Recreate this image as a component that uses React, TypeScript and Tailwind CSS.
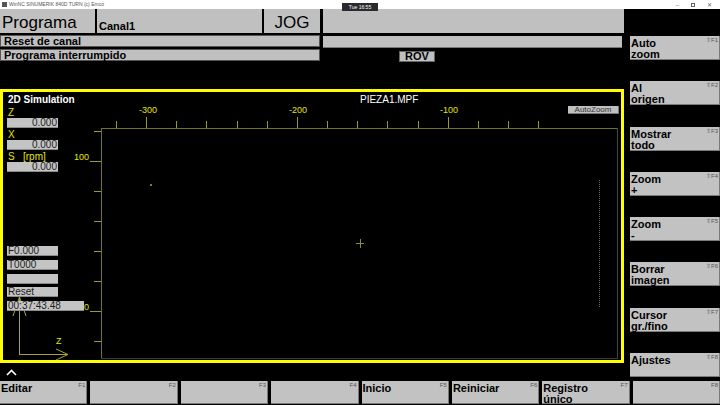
import React from 'react';

const FONT = { fontFamily: '"Liberation Sans", Arial, sans-serif' };

const SIDE_KEYS: [string, string, string][] = [
  ['Auto', 'zoom', '⇧F1'],
  ['Al', 'origen', '⇧F2'],
  ['Mostrar', 'todo', '⇧F3'],
  ['Zoom', '+', '⇧F4'],
  ['Zoom', '-', '⇧F5'],
  ['Borrar', 'imagen', '⇧F6'],
  ['Cursor', 'gr./fino', '⇧F7'],
  ['Ajustes', '', '⇧F8'],
];

const BOTTOM_KEYS: [string, string, string][] = [
  ['Editar', '', 'F1'],
  ['', '', 'F2'],
  ['', '', 'F3'],
  ['', '', 'F4'],
  ['Inicio', '', 'F5'],
  ['Reiniciar', '', 'F6'],
  ['Registro', 'único', 'F7'],
  ['', '', 'F8'],
];

// ticks del eje superior (coordenadas de pantalla)
const TOP_TICKS = Array.from({ length: 15 }, (_, i) => 116 + i * 30.15);
const LEFT_TICKS = Array.from({ length: 8 }, (_, i) => 131 + i * 30);

const SoftKey: React.FC<{ l1: string; l2: string; fk: string; className?: string }> = ({ l1, l2, fk, className = '' }) => (
  <div className={`relative bg-[#c2c2c2] border-b border-r border-[#7a7a7a] px-[1px] pt-[2px] text-[11px] leading-[10px] font-bold text-black ${className}`}>
    <div>{l1}</div>
    {l2 && <div className="pt-[1px]">{l2}</div>}
    <span className="absolute top-[1px] right-[1px] text-[6px] leading-[6px] font-normal text-[#555]">{fk}</span>
  </div>
);

const Field: React.FC<{ value?: string; right?: boolean; wide?: boolean }> = ({ value = '', right = false, wide = false }) => (
  <div
    className={`ml-[4px] h-[10px] bg-[#c4c4c4] border-b border-[#8a8a8a] text-[10px] leading-[10px] text-[#1c1c1c] px-[1px] overflow-hidden whitespace-nowrap ${wide ? 'w-[77px]' : 'w-[51px]'} ${right ? 'text-right' : ''}`}
  >
    {value}
  </div>
);

const Label: React.FC<{ children: React.ReactNode }> = ({ children }) => (
  <div className="h-[12px] flex items-end pl-[5px] text-[10px] leading-[10px] text-[#e4e400] whitespace-pre">{children}</div>
);

const Chart: React.FC = () => (
  <svg width={618} height={255} viewBox="3 105 618 255" className="[grid-area:1/1] block" style={FONT}>
    {/* marco del área de dibujo */}
    <line x1={101} y1={128.5} x2={618} y2={128.5} stroke="#74741f" />
    <line x1={101.5} y1={128} x2={101.5} y2={359} stroke="#74741f" />
    <line x1={617.5} y1={128} x2={617.5} y2={359} stroke="#4a4a18" />
    <line x1={101} y1={358.5} x2={618} y2={358.5} stroke="#3c3c20" />
    {TOP_TICKS.map((x, i) => {
      const major = i === 1 || i === 6 || i === 11;
      return <line key={i} x1={Math.round(x) + 0.5} y1={major ? 117 : 121} x2={Math.round(x) + 0.5} y2={128} stroke="#9a9a30" />;
    })}
    {LEFT_TICKS.map((y, i) => {
      const major = i === 1 || i === 6;
      return <line key={i} x1={major ? 90 : 94} y1={y + 0.5} x2={101} y2={y + 0.5} stroke="#9a9a30" />;
    })}
    <g fill="#e4e400" fontSize={9}>
      <text x={148} y={113} textAnchor="middle">-300</text>
      <text x={298} y={113} textAnchor="middle">-200</text>
      <text x={449} y={113} textAnchor="middle">-100</text>
      <text x={89} y={160} textAnchor="end">100</text>
      <text x={89} y={310} textAnchor="end">0</text>
    </g>
    {/* punto y cursor */}
    <rect x={150} y={184} width={2} height={2} fill="#7a7a30" />
    <line x1={356} y1={243.5} x2={364} y2={243.5} stroke="#8a8a40" />
    <line x1={360.5} y1={239} x2={360.5} y2={248} stroke="#8a8a40" />
    <line x1={599.5} y1={180} x2={599.5} y2={307} stroke="#6a6a6a" strokeDasharray="1 1" />
    {/* indicador de ejes */}
    <g stroke="#a4a434" fill="none">
      <line x1={19.5} y1={297} x2={19.5} y2={354.5} />
      <line x1={19} y1={354.5} x2={68} y2={354.5} />
      <polyline points="13,316 19.5,297 26,316" />
      <polyline points="56,349 68,354.5 56,360" />
    </g>
    <text x={56} y={344} fill="#e4e400" fontSize={9}>Z</text>
  </svg>
);

export default function App() {
  return (
    <div className="relative w-[720px] h-[405px] bg-black overflow-hidden select-none" style={FONT}>
      {/* barra de título de Windows */}
      <div className="h-[9px] bg-white flex items-center pl-[2px] gap-[2px]">
        <div className="w-[5px] h-[5px] bg-[#555]" />
        <span className="text-[5px] leading-[5px] text-[#555]">WinNC SINUMERIK 840D TURN (c) Emco</span>
        <div className="ml-auto flex items-center gap-[12px] pr-[8px] text-[6px] leading-[6px] text-[#666]">
          <span>–</span>
          <span className="w-[4px] h-[4px] border border-[#666]" />
          <span>✕</span>
        </div>
      </div>
      <div className="absolute left-[342px] top-[3px] w-[36px] h-[8px] bg-[#2a2a2e] text-white text-[5px] leading-[8px] text-center z-10">
        Tue 16:55
      </div>

      <div className="flex h-[372px]">
        {/* columna izquierda */}
        <div className="w-[624px] flex flex-col">
          <div className="h-[24px] flex bg-black text-black">
            <div className="w-[95px] bg-[#c0c0c0] flex items-end pl-[2px] pb-[2px] text-[17px] leading-[17px]">Programa</div>
            <div className="w-[165px] ml-[2px] bg-[#c0c0c0] flex items-end pl-[2px] pb-[1px] text-[11px] leading-[11px] font-bold">Canal1</div>
            <div className="w-[56px] ml-[2px] bg-[#c0c0c0] flex items-end justify-center pb-[2px] text-[17px] leading-[17px]">JOG</div>
            <div className="flex-1 ml-[3px] bg-[#c0c0c0]" />
          </div>
          <div className="h-[2px]" />
          <div className="h-[12px] flex">
            <div className="w-[320px] bg-[#c0c0c0] border border-[#555] pl-[3px] text-[11px] leading-[10px] font-bold text-black">Reset de canal</div>
            <div className="w-[299px] ml-[3px] mt-[1px] h-[12px] bg-[#c0c0c0] border-b border-[#777]" />
          </div>
          <div className="h-[12px] mt-[2px] flex">
            <div className="w-[320px] bg-[#c0c0c0] border border-[#555] pl-[3px] text-[11px] leading-[10px] font-bold text-black">Programa interrumpido</div>
            <div className="ml-[79px] mt-[2px] w-[36px] h-[11px] bg-[#c0c0c0] border border-[#666] text-center text-[11px] leading-[9px] font-bold text-black">ROV</div>
          </div>

          {/* ventana de simulación */}
          <div className="mt-[28px] h-[274px] border-[3px] border-[#ffff00] flex flex-col">
            <div className="h-[13px] flex items-end text-white text-[10px] leading-[10px] font-bold">
              <div className="w-[357px] pl-[5px]">2D Simulation</div>
              <div className="font-normal">PIEZA1.MPF</div>
            </div>
            <div className="h-[255px] grid">
              <Chart />
              <div className="[grid-area:1/1] flex flex-col pt-[1px] z-10">
                <Label>Z</Label>
                <Field value="0.000" right />
                <Label>X</Label>
                <Field value="0.000" right />
                <Label>{'S   [rpm]'}</Label>
                <Field value="0.000" right />
                <div className="mt-[74px] flex flex-col gap-[3.75px]">
                  <Field value="F0.000" />
                  <Field value="T0000" />
                  <Field />
                  <Field value="Reset" />
                  <Field value="00:37:43.48" wide />
                </div>
              </div>
              <div className="[grid-area:1/1] self-start justify-self-end mt-[1px] mr-[2px] w-[51px] h-[8px] bg-[#c0c0c0] border-b border-r border-[#777] text-center text-[8px] leading-[8px] text-[#333] z-10">
                AutoZoom
              </div>
            </div>
          </div>

          <div className="h-[18px] flex items-center pl-[6px]">
            <svg width={11} height={7} viewBox="0 0 11 7">
              <polyline points="1,6 5.5,1.5 10,6" fill="none" stroke="white" strokeWidth={1.6} />
            </svg>
          </div>
        </div>

        {/* softkeys verticales */}
        <div className="flex-1 pl-[6px] pt-[27px] flex flex-col gap-[21.3px]">
          {SIDE_KEYS.map(([a, b, f]) => (
            <SoftKey key={f} l1={a} l2={b} fk={f} className="h-[24px]" />
          ))}
        </div>
      </div>

      {/* softkeys horizontales */}
      <div className="grid grid-cols-8 gap-[3px] h-[23px]">
        {BOTTOM_KEYS.map(([a, b, f]) => (
          <SoftKey key={f} l1={a} l2={b} fk={f} className="h-[23px]" />
        ))}
      </div>
    </div>
  );
}
